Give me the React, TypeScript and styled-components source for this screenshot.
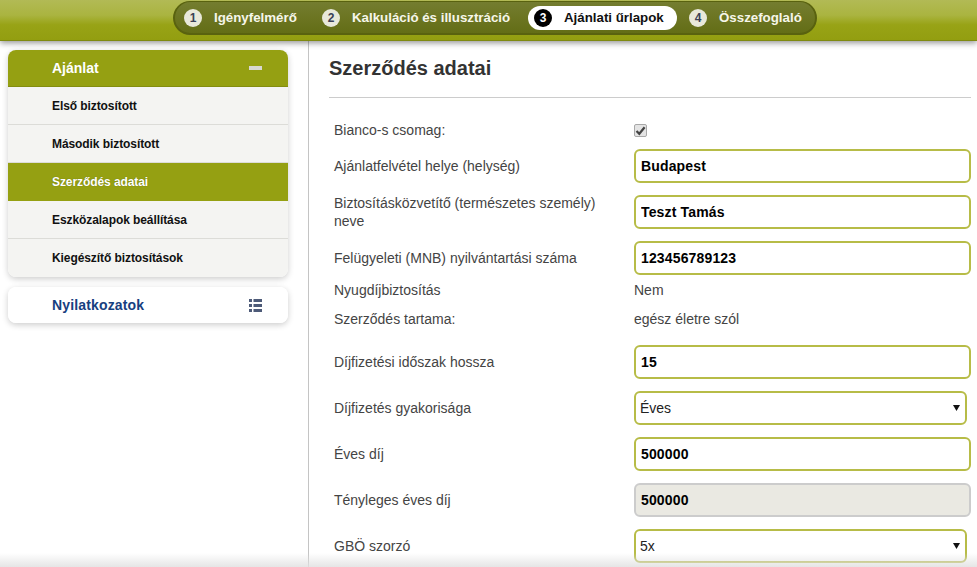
import React from "react";
import styled, { createGlobalStyle } from "styled-components";

const Global = createGlobalStyle`
  html, body { margin: 0; padding: 0; height: 100%; overflow: hidden; background: #fff; }
  body { font-family: "Liberation Sans", Arial, sans-serif; font-size: 14px; color: #333; }
  #root { height: 100%; }
`;

const arrowSvg =
  "url(\"data:image/svg+xml;utf8,<svg xmlns='http://www.w3.org/2000/svg' width='7' height='6'><path d='M0 0h7L3.5 6z' fill='%23111'/></svg>\")";
const checkSvg =
  "url(\"data:image/svg+xml;utf8,<svg xmlns='http://www.w3.org/2000/svg' width='11' height='11'><path d='M1.5 6l2.8 2.8L9.6 2.2' fill='none' stroke='%23444' stroke-width='2.2'/></svg>\")";

const Page = styled.div`
  position: relative;
  width: 977px;
  height: 567px;
  overflow: hidden;
  display: flex;
  flex-direction: column;
`;

const Header = styled.header`
  height: 41px;
  flex: none;
  box-sizing: border-box;
  padding-left: 173px;
  border-bottom: 1px solid #7f8a10;
  background: linear-gradient(to bottom, #b2ba55 0%, #aab440 38%, #98a316 62%, #939e10 100%);
  box-shadow: 0 2px 6px rgba(0, 0, 0, 0.42);
  display: flex;
  position: relative;
  z-index: 2;
`;

const Stepper = styled.nav`
  margin-top: 1px;
  width: 644px;
  height: 34px;
  box-sizing: border-box;
  padding: 0 0 0 6px;
  border-radius: 17px;
  border: 2px solid #59620f;
  border-top-width: 1px;
  background: linear-gradient(to bottom, #747d30 0%, #6c7522 50%, #636d16 100%);
  display: flex;
  align-items: center;
`;

const Step = styled.div<{ $active?: boolean; $width: number }>`
  width: ${(p) => p.$width}px;
  height: 24px;
  box-sizing: border-box;
  padding-left: ${(p) => (p.$active ? 6 : 3)}px;
  margin-right: ${(p) => (p.$active ? 9 : 0)}px;
  border-radius: 12px;
  display: flex;
  align-items: center;
  flex: none;
  background: ${(p) => (p.$active ? "#fff" : "transparent")};
  color: ${(p) => (p.$active ? "#111" : "#f6f6ea")};
  font-size: 13.3px;
  font-weight: bold;
  white-space: nowrap;
`;

const StepNum = styled.span<{ $active?: boolean }>`
  width: 18px;
  height: 18px;
  flex: none;
  border-radius: 50%;
  margin-right: 12px;
  background: ${(p) => (p.$active ? "#000" : "#e8e8da")};
  color: ${(p) => (p.$active ? "#fff" : "#3a3f55")};
  font-size: 12px;
  font-weight: bold;
  display: flex;
  align-items: center;
  justify-content: center;
`;

const Body = styled.div`
  flex: 1;
  display: flex;
  min-height: 0;
`;

const Sidebar = styled.aside`
  width: 309px;
  flex: none;
  box-sizing: border-box;
  border-right: 1px solid #c4c4c4;
  padding: 9px 20px 0 8px;
  display: flex;
  flex-direction: column;
  gap: 10px;
`;

const Panel = styled.section`
  border-radius: 8px;
  background: #fff;
  box-shadow: 0 2px 6px rgba(0, 0, 0, 0.2);
  overflow: hidden;
`;

const PanelHead = styled.div<{ $open?: boolean }>`
  height: ${(p) => (p.$open ? 37 : 36)}px;
  box-sizing: border-box;
  padding: 0 26px 0 44px;
  display: flex;
  align-items: center;
  justify-content: space-between;
  background: ${(p) => (p.$open ? "#95a012" : "#fff")};
  color: ${(p) => (p.$open ? "#fff" : "#17407f")};
  border-bottom: ${(p) => (p.$open ? "1px solid #838d10" : "none")};
  font-size: 14px;
  font-weight: bold;
  letter-spacing: ${(p) => (p.$open ? 0 : 0.15)}px;
`;

const Minus = styled.span`
  width: 13px;
  height: 4px;
  background: #d8d8d0;
`;

const MenuItem = styled.div<{ $active?: boolean }>`
  height: 38px;
  box-sizing: border-box;
  padding-left: 44px;
  display: flex;
  align-items: center;
  font-size: 12px;
  font-weight: bold;
  letter-spacing: -0.08px;
  color: ${(p) => (p.$active ? "#fff" : "#111")};
  background: ${(p) => (p.$active ? "#95a012" : "#f4f4f2")};
  border-bottom: 1px solid ${(p) => (p.$active ? "#95a012" : "#dcdcd8")};
  text-shadow: ${(p) => (p.$active ? "0 0 1px rgba(60,60,0,0.5)" : "none")};
  &:last-child { border-bottom: none; }
`;

const Content = styled.main`
  flex: 1;
  padding: 0 6px 0 20px;
`;

const Title = styled.h1`
  margin: 0;
  height: 57px;
  box-sizing: border-box;
  padding-top: 15px;
  border-bottom: 1px solid #cccccc;
  font-size: 20px;
  line-height: 24px;
  font-weight: bold;
  color: #333;
`;

const Form = styled.form`
  padding: 23px 0 0 5px;
`;

const Row = styled.div<{ $gap?: number }>`
  display: grid;
  grid-template-columns: 300px 1fr;
  align-items: center;
  margin-bottom: ${(p) => p.$gap ?? 12}px;
  min-height: 18px;
`;

const Label = styled.label`
  font-size: 14px;
  line-height: 18px;
  margin: -1px 0;
  color: #444;
  padding-right: 20px;
`;

const Value = styled.span`
  font-size: 14px;
  line-height: 18px;
  color: #444;
`;

const CheckCell = styled.div`
  display: flex;
`;

const Check = styled.input`
  appearance: none;
  margin: 0;
  width: 13px;
  height: 13px;
  box-sizing: border-box;
  border: 1px solid #a8a8a8;
  border-radius: 2px;
  background: #e4e4e4 ${checkSvg} center no-repeat;
`;

const TextInput = styled.input<{ $disabled?: boolean }>`
  width: 337px;
  height: 34px;
  box-sizing: border-box;
  padding: 0 5px;
  border: 2px solid ${(p) => (p.$disabled ? "#cccccc" : "#b7bc47")};
  border-radius: 6px;
  background: ${(p) => (p.$disabled ? "#eae9e2" : "#fff")};
  color: #000;
  font-family: "Liberation Sans", Arial, sans-serif;
  font-size: 14px;
  font-weight: bold;
  letter-spacing: 0.15px;
  outline: none;
`;

const Select = styled.select`
  appearance: none;
  width: 333px;
  height: 34px;
  box-sizing: border-box;
  padding: 0 0 0 4px;
  border: 2px solid #b7bc47;
  border-radius: 6px;
  background: #fff ${arrowSvg} right 5px center no-repeat;
  color: #222;
  font-family: "Liberation Sans", Arial, sans-serif;
  font-size: 14px;
  outline: none;
`;

const BottomFade = styled.div`
  position: absolute;
  left: 0;
  right: 0;
  bottom: 0;
  height: 14px;
  pointer-events: none;
  background: linear-gradient(to bottom, rgba(225, 225, 225, 0), rgba(225, 225, 225, 0.85));
`;

const ListIcon = () => (
  <svg width="13" height="13" viewBox="0 0 13 13" fill="#4d5a78" aria-hidden="true">
    <rect x="0" y="0" width="3" height="3" />
    <rect x="4.5" y="0" width="8.5" height="3" />
    <rect x="0" y="5" width="3" height="3" />
    <rect x="4.5" y="5" width="8.5" height="3" />
    <rect x="0" y="10" width="3" height="3" />
    <rect x="4.5" y="10" width="8.5" height="3" />
  </svg>
);

const steps = [
  { n: 1, label: "Igényfelmérő", width: 138 },
  { n: 2, label: "Kalkuláció és illusztráció", width: 209 },
  { n: 3, label: "Ajánlati űrlapok", width: 149, active: true },
  { n: 4, label: "Összefoglaló", width: 128 },
];

const items = [
  { label: "Első biztosított" },
  { label: "Második biztosított" },
  { label: "Szerződés adatai", active: true },
  { label: "Eszközalapok beállítása" },
  { label: "Kiegészítő biztosítások" },
];

export default function App() {
  return (
    <Page>
      <Global />
      <Header>
        <Stepper>
          {steps.map((s) => (
            <Step key={s.n} $active={s.active} $width={s.width}>
              <StepNum $active={s.active}>{s.n}</StepNum>
              {s.label}
            </Step>
          ))}
        </Stepper>
      </Header>
      <Body>
        <Sidebar>
          <Panel>
            <PanelHead $open>
              Ajánlat
              <Minus />
            </PanelHead>
            {items.map((i) => (
              <MenuItem key={i.label} $active={i.active}>
                {i.label}
              </MenuItem>
            ))}
          </Panel>
          <Panel>
            <PanelHead>
              Nyilatkozatok
              <ListIcon />
            </PanelHead>
          </Panel>
        </Sidebar>
        <Content>
          <Title>Szerződés adatai</Title>
          <Form>
            <Row $gap={10}>
              <Label>Bianco-s csomag:</Label>
              <CheckCell>
                <Check type="checkbox" defaultChecked />
              </CheckCell>
            </Row>
            <Row>
              <Label>Ajánlatfelvétel helye (helység)</Label>
              <TextInput defaultValue="Budapest" />
            </Row>
            <Row>
              <Label>Biztosításközvetítő (természetes személy) neve</Label>
              <TextInput defaultValue="Teszt Tamás" />
            </Row>
            <Row $gap={6}>
              <Label>Felügyeleti (MNB) nyilvántartási száma</Label>
              <TextInput defaultValue="123456789123" />
            </Row>
            <Row $gap={11}>
              <Label>Nyugdíjbiztosítás</Label>
              <Value>Nem</Value>
            </Row>
            <Row $gap={17}>
              <Label>Szerződés tartama:</Label>
              <Value>egész életre szól</Value>
            </Row>
            <Row>
              <Label>Díjfizetési időszak hossza</Label>
              <TextInput defaultValue="15" />
            </Row>
            <Row>
              <Label>Díjfizetés gyakorisága</Label>
              <Select defaultValue="Éves">
                <option>Éves</option>
              </Select>
            </Row>
            <Row>
              <Label>Éves díj</Label>
              <TextInput defaultValue="500000" />
            </Row>
            <Row>
              <Label>Tényleges éves díj</Label>
              <TextInput defaultValue="500000" readOnly $disabled />
            </Row>
            <Row>
              <Label>GBÖ szorzó</Label>
              <Select defaultValue="5x">
                <option>5x</option>
              </Select>
            </Row>
          </Form>
        </Content>
      </Body>
      <BottomFade />
    </Page>
  );
}
